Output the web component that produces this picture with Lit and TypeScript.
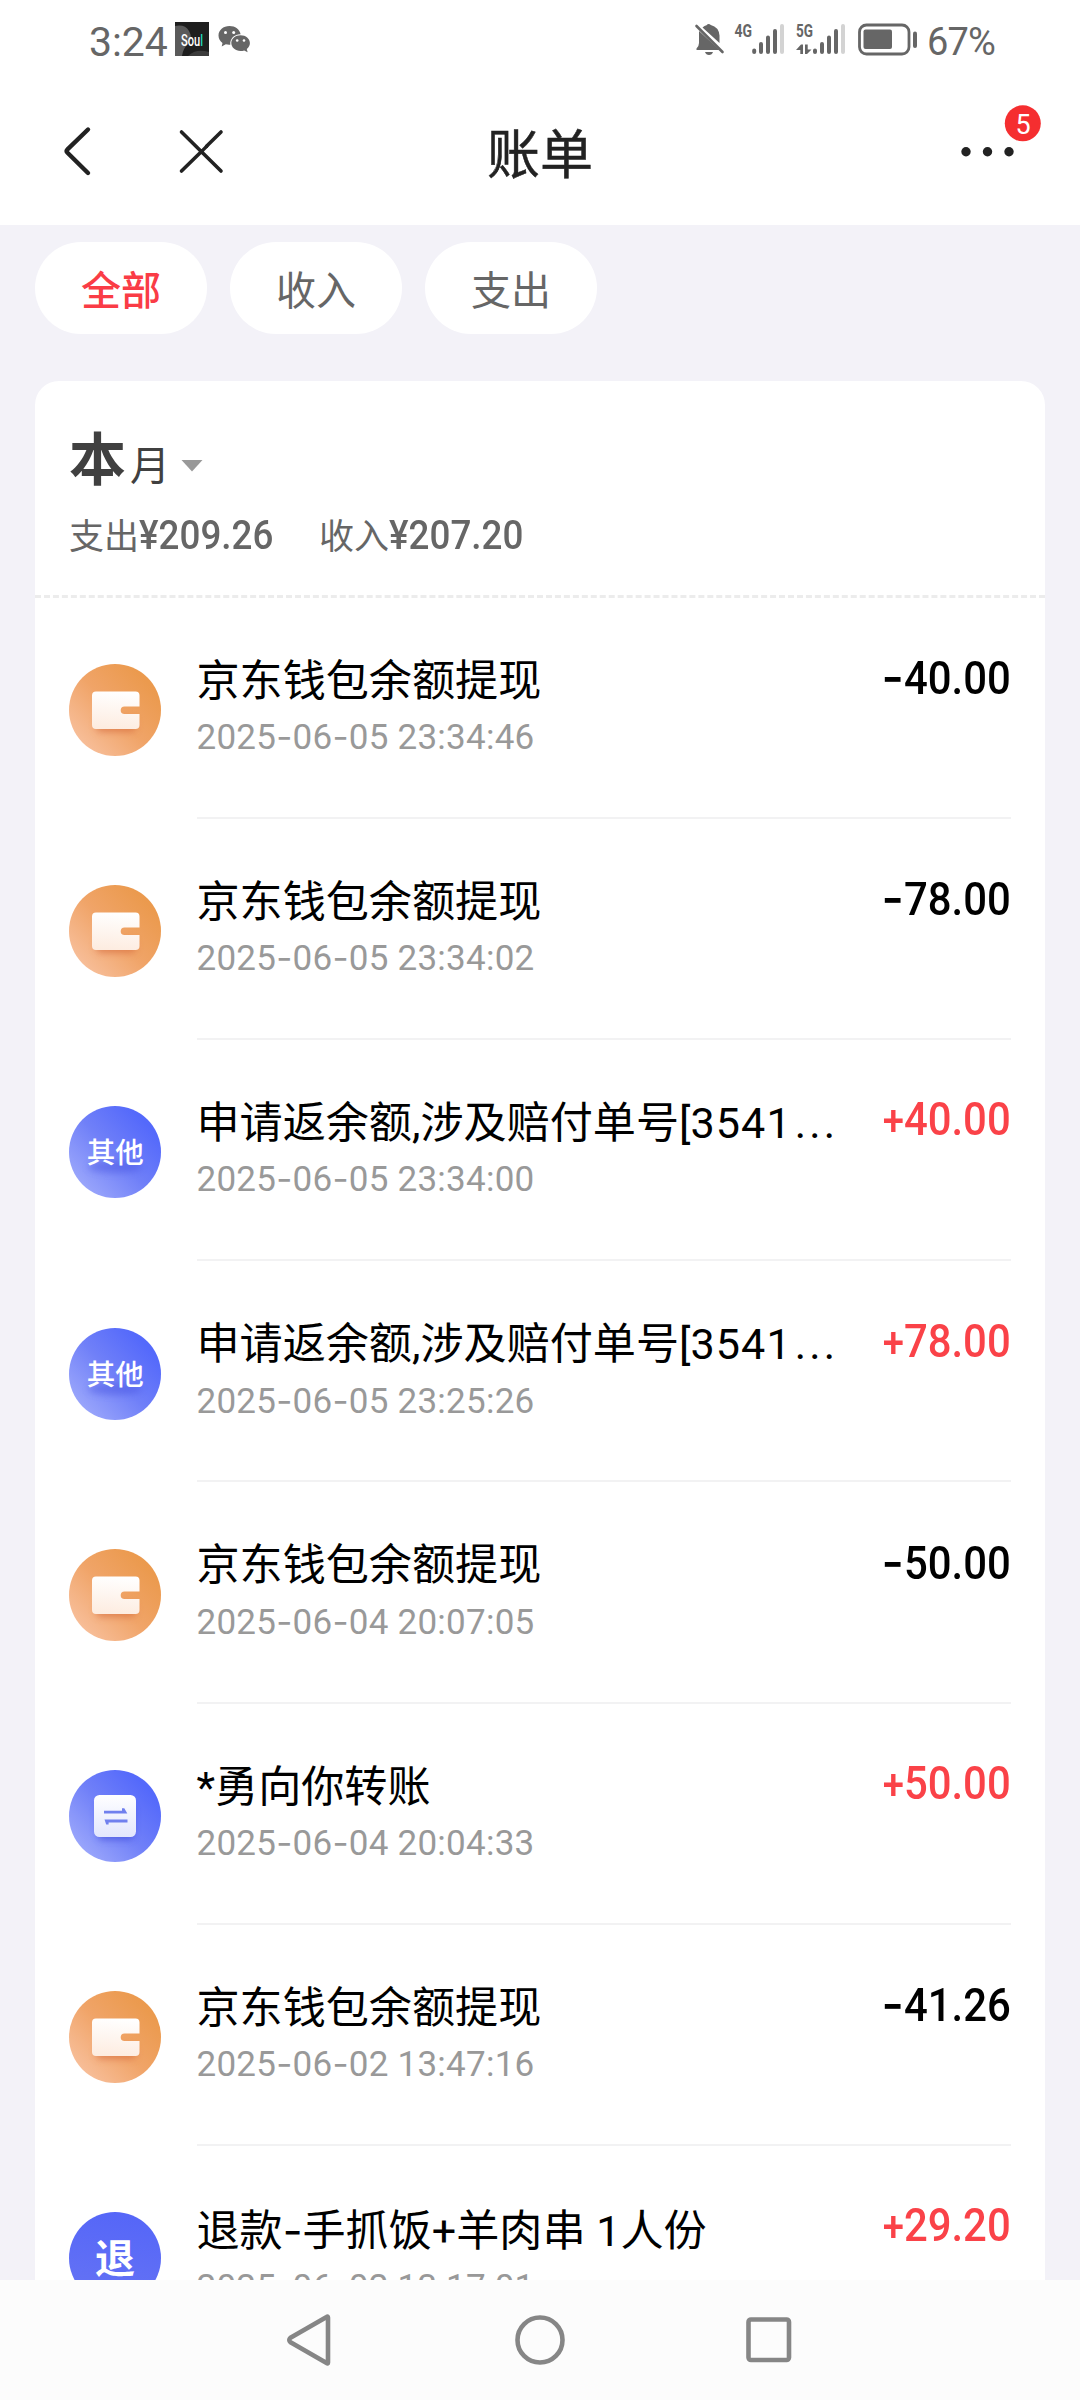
import { LitElement, html, css, svg } from "lit";
import { customElement, property } from "lit/decorators.js";

type Kind = "wallet" | "other" | "transfer" | "refund";

interface Bill {
  kind: Kind;
  title: string;
  cut?: boolean;
  time: string;
  sign: "+" | "-";
  amount: string;
}

const BILLS: Bill[] = [
  { kind: "wallet", title: "京东钱包余额提现", time: "2025-06-05 23:34:46", sign: "-", amount: "40.00" },
  { kind: "wallet", title: "京东钱包余额提现", time: "2025-06-05 23:34:02", sign: "-", amount: "78.00" },
  { kind: "other", title: "申请返余额,涉及赔付单号[3541", cut: true, time: "2025-06-05 23:34:00", sign: "+", amount: "40.00" },
  { kind: "other", title: "申请返余额,涉及赔付单号[3541", cut: true, time: "2025-06-05 23:25:26", sign: "+", amount: "78.00" },
  { kind: "wallet", title: "京东钱包余额提现", time: "2025-06-04 20:07:05", sign: "-", amount: "50.00" },
  { kind: "transfer", title: "*勇向你转账", time: "2025-06-04 20:04:33", sign: "+", amount: "50.00" },
  { kind: "wallet", title: "京东钱包余额提现", time: "2025-06-02 13:47:16", sign: "-", amount: "41.26" },
  { kind: "refund", title: "退款-手抓饭+羊肉串 1人份", time: "2025-06-02 13:17:01", sign: "+", amount: "29.20" },
];

/* Wraps each hyphen so that it can take the wide dash shape. */
const dashes = (text: string) =>
  text.split(/(-)/).map((part) => (part === "-" ? html`<span class="dash">-</span>` : part));

/* Wraps the trailing run of digits, which is spaced a little wider. */
const titleText = (text: string) => {
  const m = /^(.*\[)(\d+)$/.exec(text);
  return m ? html`${m[1]}<span class="digits">${m[2]}</span>` : dashes(text);
};

@customElement("status-bar")
class StatusBar extends LitElement {
  static styles = css`
    :host { display: block; }
    .bar { height: 80px; display: flex; justify-content: space-between; padding: 0 84px 0 89px; color: #666; font-family: Roboto, sans-serif; }
    .side { display: flex; height: 80px; align-items: center; }
    .time { font-size: 41px; line-height: 50px; width: 86px; padding-top: 3px; letter-spacing: -0.1px; }
    .pct { font-size: 38px; line-height: 50px; padding-top: 4px; width: 69px; letter-spacing: -0.9px; white-space: nowrap; }
    svg { display: block; }
    .net { font: 700 18px "Liberation Sans Narrow", "Roboto", sans-serif; }
    .soul { font: 500 17px "Liberation Sans Narrow", Roboto, sans-serif; }
  `;
  render() {
    return html`<div class="bar">
      <div class="side">
        <div class="time">3:24</div>
        <svg width="80" height="80" viewBox="175 0 80 80">
          <rect x="175" y="22" width="34" height="34" fill="#1e1e1e" />
          <path d="M175 26q10-2 14 5t0 12q-6 5-7 13h-7z" fill="#5a5a5a" />
          <path d="M188 56q8-8 21-4v4z" fill="#3c3c3c" />
          <text class="soul" x="181" y="45.500" fill="#fff" textLength="22" lengthAdjust="spacingAndGlyphs">Sou<tspan fill="#20d8b8">l</tspan></text>
          <g fill="#666">
            <path d="M229.500 26c-6.200 0-11 4.200-11 9.500 0 3 1.600 5.600 4 7.400l-.8 3.600 4.100-2.200q2.200.6 4.500.4c-.7-6.500 4.700-10.700 10.300-10.500-.8-4.800-5.400-8.200-11.100-8.200z" />
            <path d="M240.500 35.200c-5.200 0-9.200 3.500-9.200 7.900s4 7.900 9.200 7.900q2 0 3.700-.6l3.400 1.900-.8-3.200c2-1.500 3.100-3.600 3.100-6 0-4.400-4.100-7.900-9.400-7.900z" />
          </g>
          <g fill="#fff">
            <circle cx="225.500" cy="32.500" r="1.500" /><circle cx="233.700" cy="32.500" r="1.500" />
            <circle cx="237.200" cy="40.500" r="1.300" /><circle cx="244" cy="40.500" r="1.300" />
          </g>
        </svg>
      </div>
      <div class="side">
        <svg width="237" height="80" viewBox="690 0 237 80" fill="#666">
          <path d="M699 31v12q0 3-2.500 5.500v1.500h23z" />
          <path d="M702.500 27.500q2-1.700 4-2.300 2-2.500 4.300-.2 8 2 8.700 10.500v7.500z" />
          <path d="M705 52h8q-1 3-4 3t-4-3z" />
          <path d="M696.500 26l26 26" stroke="#666" stroke-width="2.600" stroke-linecap="round" />
          <text class="net" x="734.500" y="37" textLength="17.500" lengthAdjust="spacingAndGlyphs">4G</text>
          <text class="net" x="796" y="37" textLength="17" lengthAdjust="spacingAndGlyphs">5G</text>
          <g stroke="#666" stroke-width="4" stroke-linecap="round">
            <path d="M754.200 50.500v1.500M761 44v8M768 37.500v14.500M775 31v21" />
            <path d="M815 50.500v1.500M822 44v8M829 37.500v14.500M836 31v21" />
            <path d="M782 26v26M843 26v26" stroke="#d3d3d3" />
          </g>
          <path d="M796 50l5-5.500h2V54h-2.700v-4zM805 44.500h2.700v5h3.800l-4.500 4.500h-2z" />
          <rect x="859.500" y="25" width="49.500" height="29" rx="7" fill="none" stroke="#666" stroke-width="2.800" />
          <rect x="863.500" y="29.500" width="28.500" height="19.500" rx="2" />
          <rect x="913" y="31.500" width="4" height="16.500" rx="2" />
        </svg>
        <div class="pct">67%</div>
      </div>
    </div>`;
  }
}

@customElement("title-bar")
class TitleBar extends LitElement {
  static styles = css`
    :host { display: block; }
    .bar { height: 145px; display: grid; grid-template-columns: 1fr auto 1fr; }
    svg { display: block; }
    .title { font: 400 53px/60px "Noto Sans CJK SC", sans-serif; color: #222; padding-top: 41px; -webkit-text-stroke: 0.5px #222; }
    .more { justify-self: end; }
    .count { font: 27px Roboto, sans-serif; }
  `;
  render() {
    return html`<div class="bar">
      <svg width="240" height="145" viewBox="0 80 240 145" fill="none" stroke="#222" stroke-linecap="round" stroke-linejoin="round">
        <path d="M88 129.500L67.500 149.300q-1.700 1.700 0 3.400L88 173" stroke-width="4.400" />
        <path d="M181.500 132l39.500 39M221 132l-14.500 14.300M202 151l-20.500 20" stroke-width="3.600" />
        <path d="M207 146l-6 6" stroke-width="3.200" />
      </svg>
      <div class="title">账单</div>
      <svg class="more" width="140" height="145" viewBox="940 80 140 145" fill="#222">
        <circle cx="966" cy="151.700" r="4.700" /><circle cx="987.500" cy="151.700" r="4.700" /><circle cx="1009" cy="151.700" r="4.700" />
        <circle cx="1022.800" cy="123.300" r="18" fill="#f52e30" />
        <text class="count" x="1023.200" y="134" text-anchor="middle" fill="#fff">5</text>
      </svg>
    </div>`;
  }
}

@customElement("bill-icon")
class BillIcon extends LitElement {
  @property() kind: Kind = "wallet";
  static styles = css`
    :host { display: block; width: 92px; height: 92px; }
    svg { display: block; }
    .label { font: 500 28.500px "Noto Sans CJK SC", sans-serif; }
    .big { font: 700 40px "Noto Sans CJK SC", sans-serif; }
  `;
  private glyph() {
    switch (this.kind) {
      case "wallet":
        return svg`
          <rect x="27" y="54" width="40" height="14" rx="5" fill="#d4683a" opacity=".6" filter="url(#soft)" />
          <path d="M27 27.500h39.500q4 0 4 4v11H55.500a3.800 3.800 0 0 0 0 7.600H70.500v10.900q0 4-4 4H27q-4 0-4-4v-29.500q0-4 4-4z" fill="url(#cream)" />`;
      case "other":
        return svg`
          <ellipse cx="46" cy="61" rx="27" ry="6" fill="#3c48dc" opacity=".4" filter="url(#soft)" />
          <text class="label" x="46.300" y="57" text-anchor="middle" fill="#fff">其他</text>`;
      case "transfer":
        return svg`
          <rect x="28" y="34" width="37" height="36" rx="6" fill="#3a46d8" opacity=".6" filter="url(#soft)" />
          <rect x="25" y="25" width="42" height="42" rx="5.500" fill="url(#ice)" />
          <path d="M35 40.800H53V38.300H55.300L58.300 43.600H35z" fill="#7080ee" />
          <path d="M58.500 49.500H35.500L37.200 54.500H39.600V52.400H58.500z" fill="#7080ee" />`;
      default:
        return svg`<text class="big" x="46" y="60.500" text-anchor="middle" fill="#fff">退</text>`;
    }
  }
  render() {
    const fill = this.kind === "wallet" ? "url(#orange)" : this.kind === "refund" ? "url(#indigo)" : "url(#blue)";
    return html`<svg width="92" height="92" viewBox="0 0 92 92">
      <defs>
        <linearGradient id="orange" x1=".85" y1=".2" x2=".15" y2=".85"><stop offset="0" stop-color="#eb9a4e" /><stop offset=".5" stop-color="#f0a468" /><stop offset="1" stop-color="#f7bd97" /></linearGradient>
        <linearGradient id="blue" x1=".85" y1=".2" x2=".15" y2=".85"><stop offset="0" stop-color="#5469fb" /><stop offset=".5" stop-color="#7080f8" /><stop offset="1" stop-color="#98a4fb" /></linearGradient>
        <linearGradient id="indigo" x1=".6" y1="0" x2=".4" y2="1"><stop offset="0" stop-color="#5566f8" /><stop offset="1" stop-color="#6573f4" /></linearGradient>
        <linearGradient id="cream" x1=".5" y1="0" x2=".4" y2="1"><stop offset="0" stop-color="#fff" /><stop offset="1" stop-color="#fdece0" /></linearGradient>
        <linearGradient id="ice" x1=".5" y1="0" x2=".5" y2="1"><stop offset="0" stop-color="#fff" /><stop offset="1" stop-color="#e2e6fd" /></linearGradient>
        <filter id="soft" x="-30%" y="-60%" width="160%" height="220%"><feGaussianBlur stdDeviation="3.500" /></filter>
      </defs>
      <circle cx="46" cy="46" r="46" fill=${fill} />
      ${this.glyph()}
    </svg>`;
  }
}

@customElement("bill-row")
class BillRow extends LitElement {
  @property({ attribute: false }) bill!: Bill;
  static styles = css`
    :host { display: block; }
    .row { height: 221.2px; box-sizing: border-box; display: flex; padding: 0 34px; }
    .icon { margin-top: 66.500px; flex: none; }
    .main { flex: 1; margin-left: 35.500px; display: flex; justify-content: space-between; align-items: flex-start; border-bottom: 2px solid #f2f2f3; }
    .title { margin-top: 59px; font: 43.100px/50px Roboto, "Noto Sans CJK SC", sans-serif; color: #000; white-space: nowrap; }
    .digits { letter-spacing: 1.100px; }
    .time { margin-top: 8.500px; font: 35px/42px Roboto, sans-serif; letter-spacing: 0.250px; color: #999; white-space: nowrap; }
    .dash { font-family: Inter, sans-serif; }
    .dots { letter-spacing: 3.200px; margin-left: 3px; }
    .amount { margin-top: 54.500px; font: 500 46px/50px Roboto, sans-serif; color: #000; white-space: nowrap; transform: scaleX(0.91); transform-origin: right; }
    .plus { color: #fa4248; }
    .sign { display: inline-block; font: 600 46px/50px Inter, sans-serif; transform: translateY(-1px) scaleX(1.15); transform-origin: right; }
    .plus .sign { font: 500 42px/50px Roboto, sans-serif; transform: none; }
  `;
  render() {
    const b = this.bill;
    return html`<div class="row">
      <bill-icon class="icon" .kind=${b.kind}></bill-icon>
      <div class="main">
        <div>
          <div class="title">${titleText(b.title)}${b.cut ? html`<span class="dots">...</span>` : ""}</div>
          <div class="time">${dashes(b.time)}</div>
        </div>
        <div class="amount ${b.sign === "+" ? "plus" : ""}"><span class="sign">${b.sign}</span>${b.amount}</div>
      </div>
    </div>`;
  }
}

@customElement("nav-bar")
class NavBar extends LitElement {
  static styles = css`
    :host { display: block; }
    .bar { height: 120px; background: #fcfcfc; display: flex; align-items: center; justify-content: center; gap: 169px; }
    svg { display: block; }
  `;
  render() {
    return html`<div class="bar">
      <svg width="60" height="60" viewBox="0 0 60 60" fill="none" stroke="#868686" stroke-width="4.600" stroke-linejoin="round"><path d="M47 7.500v45q0 1.500-1.400.6L9.500 32.200Q7 30 9.500 27.800L45.600 6.900Q47 6 47 7.500z" /></svg>
      <svg width="60" height="60" viewBox="0 0 60 60" fill="none" stroke="#868686" stroke-width="4.600"><circle cx="30" cy="30" r="22.500" /></svg>
      <svg width="60" height="60" viewBox="0 0 60 60" fill="none" stroke="#868686" stroke-width="4.600"><rect x="9.500" y="9.500" width="40.500" height="40.500" rx="2.500" /></svg>
    </div>`;
  }
}

@customElement("app-root")
class AppRoot extends LitElement {
  static styles = css`
    :host { display: block; }
    .screen { width: 1080px; height: 2400px; display: flex; flex-direction: column; background: #fff; overflow: hidden; }
    .content { flex: 1; min-height: 0; overflow: hidden; background: #f3f2f8; padding: 17px 35px 0; box-sizing: border-box; }
    .chips { display: flex; gap: 23px; }
    .chip { width: 172px; height: 92px; border-radius: 46px; background: #fff; color: #666; font: 40px/93px "Noto Sans CJK SC", sans-serif; text-align: center; }
    .active { color: #fa3c46; font-weight: 500; }
    .card { margin-top: 47px; background: #fff; border-radius: 24px 24px 0 0; }
    .head { height: 216.600px; box-sizing: border-box; padding: 40px 34px 0; border-bottom: 3px dashed #ececec; }
    .month { display: flex; align-items: baseline; height: 68px; color: #404040; font-family: "Noto Sans CJK SC", sans-serif; line-height: 68px; }
    .this { font-size: 57px; font-weight: 700; }
    .unit { font-size: 40px; margin-left: 4px; }
    .tri { margin-left: 11px; align-self: flex-start; margin-top: 39px; display: block; }
    .sums { margin-top: 21px; display: flex; font: 35px/48px "Noto Sans CJK SC", sans-serif; color: #666; }
    .sum { display: flex; align-items: baseline; width: 250px; }
    .num { font: 500 40px/48px Roboto, sans-serif; transform: scaleX(0.92); transform-origin: left; }
  `;
  render() {
    return html`<div class="screen">
      <status-bar></status-bar>
      <title-bar></title-bar>
      <div class="content">
        <div class="chips">
          <div class="chip active">全部</div>
          <div class="chip">收入</div>
          <div class="chip">支出</div>
        </div>
        <div class="card">
          <div class="head">
            <div class="month">
              <span class="this">本</span><span class="unit">月</span>
              <svg class="tri" width="22" height="12" viewBox="0 0 22 12"><path d="M0.500 0h21L11 11.500z" fill="#999" /></svg>
            </div>
            <div class="sums">
              <div class="sum">支出<span class="num">¥209.26</span></div>
              <div class="sum">收入<span class="num">¥207.20</span></div>
            </div>
          </div>
          ${BILLS.map((bill) => html`<bill-row .bill=${bill}></bill-row>`)}
        </div>
      </div>
      <nav-bar></nav-bar>
    </div>`;
  }
}
